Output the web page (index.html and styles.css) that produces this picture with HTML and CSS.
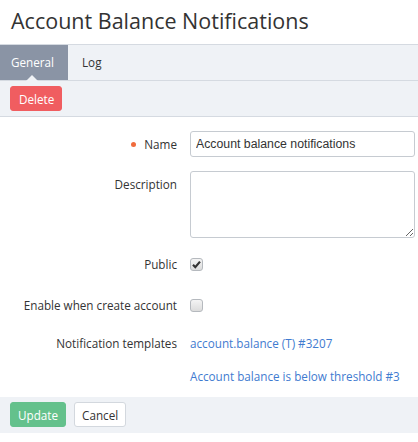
FILE: index.html
```html
<!DOCTYPE html>
<html>
<head>
<meta charset="utf-8">
<link rel="stylesheet" href="styles.css">
</head>
<body>
<h1 class="title">Account Balance Notifications</h1>
<div class="tabs">
  <div class="tab active">General</div>
  <div class="tab">Log</div>
</div>
<div class="toolbar">
  <button class="btn btn-danger">Delete</button>
</div>
<form class="form">
  <div class="row row-name">
    <label class="label required">Name</label>
    <div class="field"><input class="input" type="text" value="Account balance notifications"></div>
  </div>
  <div class="row row-desc">
    <label class="label">Description</label>
    <div class="field"><textarea class="textarea"></textarea></div>
  </div>
  <div class="row row-check">
    <label class="label">Public</label>
    <div class="field"><span class="check"><svg width="11" height="11" viewBox="0 0 11 11"><path d="M2 5.8 L4.3 8.2 L9 2.6" fill="none" stroke="#333" stroke-width="2.2"/></svg></span></div>
  </div>
  <div class="row row-check row-enable">
    <label class="label">Enable when create account</label>
    <div class="field"><span class="check"></span></div>
  </div>
  <div class="row row-link">
    <label class="label">Notification templates</label>
    <div class="field links">
      <a class="link" href="#">account.balance (T) #3207</a>
      <a class="link" href="#">Account balance is below threshold #3</a>
    </div>
  </div>
</form>
<div class="footer">
  <button class="btn btn-success">Update</button>
  <button class="btn btn-default">Cancel</button>
</div>
</body>
</html>
```
FILE: styles.css
```css
* { box-sizing: border-box; }
body {
  margin: 0;
  font-family: "Open Sans", sans-serif;
  font-size: 11.7px;
  color: #333;
  background: #fff;
}
.title {
  margin: 0;
  padding: 6px 11px 0;
  height: 44px;
  font-size: 21.5px;
  font-weight: 400;
  color: #333;
  line-height: 30px;
}
.tabs {
  display: flex;
  height: 37px;
  background: #eff2f6;
  border-top: 1px solid #d5dae1;
  border-bottom: 1px solid #d5dae1;
}
.tab {
  position: relative;
  padding: 0 14px 0 14px;
  line-height: 35px;
  color: #333;
}
.tab.active {
  background: #8a94a5;
  color: #fff;
  width: 68px;
  padding: 0 0 0 11px;
}
.tab.active::after {
  content: "";
  position: absolute;
  left: 26px;
  bottom: -1px;
  border-left: 6px solid transparent;
  border-right: 6px solid transparent;
  border-bottom: 6px solid #eff2f6;
}
.toolbar {
  background: #eff2f6;
  height: 36px;
  padding: 5px 10px;
  border-bottom: 1px solid #d5dae1;
}
.btn {
  font-family: "Open Sans", sans-serif;
  font-size: 11.7px;
  height: 25px;
  padding: 0 7px;
  border-radius: 3px;
  border: 1px solid transparent;
  cursor: pointer;
}
.btn-danger { background: #f05d60; color: #fff; border-color: #f05d60; padding: 0 7px 0 8px; }
.btn-success { background: #64c18c; color: #fff; border-color: #64c18c; }
.btn-default { background: #fff; color: #333; border-color: #d3d8de; margin-left: 5px; }
.form {
  padding-top: 14px;
}
.row {
  display: flex;
  margin-bottom: 15px;
}
.row-name { margin-bottom: 14px; }
.row-desc { margin-bottom: 18px; }
.label {
  width: 177px;
  text-align: right;
  padding-top: 5px;
  line-height: 16px;
}
.required::before {
  content: "";
  display: inline-block;
  width: 5px;
  height: 5px;
  border-radius: 50%;
  background: #f06b3c;
  margin-right: 8px;
  vertical-align: 2px;
}
.field {
  margin-left: 13px;
  width: 225px;
}
.input {
  width: 225px;
  height: 26px;
  border: 1px solid #c6cbd1;
  border-radius: 3px;
  padding: 0 5px;
  font-family: "Liberation Sans", Arial, sans-serif;
  font-size: 12.3px;
  color: #333;
}
.textarea {
  display: block;
  width: 225px;
  height: 67px;
  border: 1px solid #c6cbd1;
  border-radius: 3px;
  resize: vertical;
}
.row-check { height: 26px; margin-bottom: 15px; }
.row-enable { margin-bottom: 12px; }
.row-check .label { padding-top: 0; }
.check {
  display: inline-block;
  width: 13px;
  height: 13px;
  margin-top: 2px;
  border: 1px solid #b5b9be;
  border-radius: 3px;
  background: linear-gradient(#f4f4f4, #dcdcdc);
  position: relative;
}
.check svg { position: absolute; left: 0; top: 0; }
.row-link { margin-bottom: 13px; }
.row-link .label { padding-top: 0; }
.links { display: flex; flex-direction: column; gap: 17px; }
.link {
  color: #3f7bd0;
  text-decoration: none;
  line-height: 16px;
}
.footer {
  background: #eff2f6;
  height: 36px;
  padding: 5px 10px;
}
```
